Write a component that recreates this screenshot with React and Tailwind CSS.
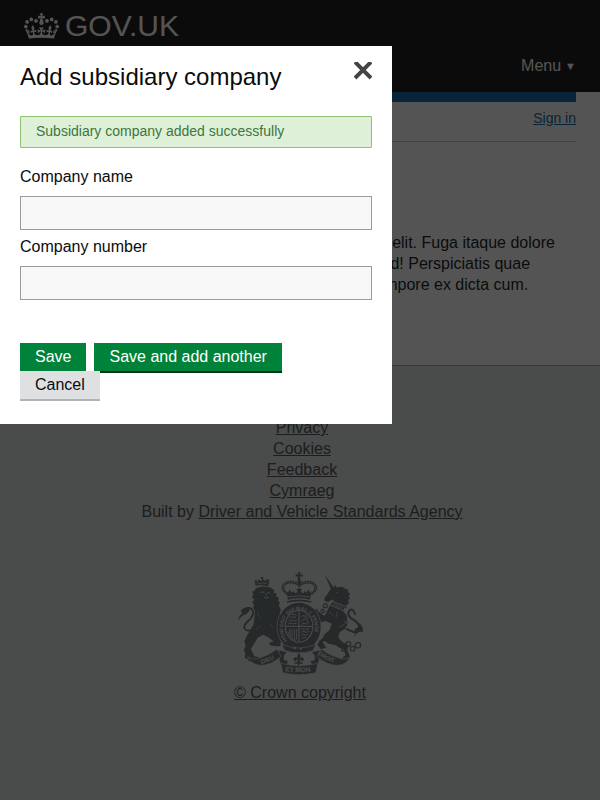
import React from "react";

function GovCrown() {
  return (
    <svg aria-hidden="true" viewBox="0 0 132 97" className="h-[26px] w-[35px] shrink-0" fill="currentColor">
      <path d="M25 30.2c3.5 1.5 7.7-.2 9.1-3.7 1.5-3.6-.2-7.8-3.9-9.2-3.6-1.4-7.6.3-9.1 3.9-1.4 3.5.3 7.5 3.9 9zM9 39.5c3.6 1.5 7.8-.2 9.2-3.7 1.5-3.6-.2-7.8-3.9-9.1-3.6-1.5-7.6.2-9.1 3.8-1.4 3.5.3 7.5 3.8 9zM4.4 57.2c3.5 1.5 7.7-.2 9.1-3.8 1.5-3.6-.2-7.7-3.9-9.1-3.5-1.5-7.6.3-9.1 3.8-1.4 3.5.3 7.6 3.9 9.1zm38.3-21.4c3.5 1.5 7.7-.2 9.1-3.8 1.5-3.6-.2-7.7-3.9-9.1-3.6-1.5-7.6.3-9.1 3.8-1.3 3.6.4 7.7 3.9 9.1zm64.4-5.6c-3.6 1.5-7.8-.2-9.1-3.7-1.5-3.6.2-7.8 3.8-9.2 3.6-1.4 7.7.3 9.2 3.9 1.3 3.5-.4 7.5-3.9 9zm15.9 9.3c-3.6 1.5-7.7-.2-9.1-3.7-1.5-3.6.2-7.8 3.7-9.1 3.6-1.5 7.7.2 9.2 3.8 1.5 3.5-.3 7.5-3.8 9zm4.7 17.7c-3.6 1.5-7.8-.2-9.2-3.8-1.5-3.6.2-7.7 3.9-9.1 3.6-1.5 7.7.3 9.2 3.8 1.3 3.5-.4 7.6-3.9 9.1zM89.3 35.8c-3.6 1.5-7.8-.2-9.2-3.8-1.4-3.6.2-7.7 3.9-9.1 3.6-1.5 7.7.3 9.2 3.8 1.4 3.6-.3 7.7-3.9 9.1zM69.7 17.7l8.9 4.7V9.3l-8.9 2.8c-.2-.3-.5-.6-.9-.9L72.4 0H59.6l3.5 11.2c-.3.3-.6.5-.9.9l-8.8-2.8v13.1l8.8-4.7c.3.3.6.7.9.9l-5 15.4v.1c-.2.8-.4 1.6-.4 2.4 0 4.1 3.1 7.5 7 8.1h.2c.3 0 .7.1 1 .1.4 0 .7 0 1-.1h.2c4-.6 7.1-4.1 7.1-8.1 0-.8-.1-1.7-.4-2.4V34l-5.1-15.4c.4-.2.7-.6 1-.9zM66 92.8c16.9 0 32.8 1.1 47.1 3.2 4-16.9 8.9-26.7 14-33.5l-9.6-3.4c1 4.9 1.1 7.2 0 10.2-1.5-1.4-3-4.3-4.2-8.7L108.6 76c2.8-2 5-3.2 7.5-3.3-4.4 9.4-10 11.9-13.6 11.2-4.3-.8-6.3-4.6-5.6-7.9 1-4.7 5.7-5.9 8-.5 4.3-8.7-3-11.4-7.6-8.8 7.1-7.2 7.9-13.5 2.1-21.1-8 6.1-8.1 12.3-4.5 20.8-4.7-5.4-12.1-2.5-9.5 6.2 3.4-5.2 7.9-2 7.2 3.1-.6 4.3-6.4 7.8-13.5 7.2-10.3-.9-10.9-8-11.2-13.8 2.5-.5 7.1 1.8 11 7.3L80.2 60c-4.1 4.4-8 5.3-12.3 5.4 1.4-4.4 8-11.6 8-11.6H55.5s6.4 7.2 7.9 11.6c-4.2-.1-8-1-12.3-5.4l1.4 16.4c3.9-5.5 8.5-7.7 10.9-7.3-.3 5.8-.9 12.8-11.1 13.8-7.2.6-12.9-2.9-13.5-7.2-.7-5 3.8-8.3 7.1-3.1 2.7-8.7-4.6-11.6-9.4-6.2 3.7-8.5 3.6-14.7-4.6-20.8-5.8 7.6-5 13.9 2.2 21.1-4.7-2.6-11.9.1-7.7 8.8 2.3-5.5 7.1-4.2 8.1.5.7 3.3-1.3 7.1-5.7 7.9-3.5.7-9-1.8-13.5-11.2 2.5.1 4.7 1.3 7.5 3.3l-4.7-15.4c-1.2 4.4-2.7 7.2-4.3 8.7-1.1-3-.9-5.3 0-10.2l-9.5 3.4c5 6.9 9.9 16.7 14 33.5 14.8-2.1 30.8-3.2 47.7-3.2z" />
    </svg>
  );
}

function RoyalArms() {
  const ink = "#666e73";
  const paper = "#dee0e2";
  return (
    <svg
      aria-hidden="true"
      viewBox="54 33 375 312"
      className="h-[104px] w-[125px]"
      fill={ink}
      stroke="none"
      fontFamily="'Liberation Sans', Arial, sans-serif"
      fontWeight="bold"
    >
      <defs>
        <path id="garter" d="M202 241A48 54 0 1 1 272 241" />
        <path id="dieu" d="M124 312Q156 305 184 280" />
        <path id="mon" d="M195 334Q238 341 290 332" />
        <path id="droit" d="M293 282Q318 306 366 312" />
      </defs>

      {/* lion */}
      <g>
        <path d="M107 78L104 62l8 5 4-10 8 7 4-8 7 7 8-6 1 10 5-2-5 14q-18-5-37-2z" />
        <circle cx="126" cy="54" r="4" />
        <circle cx="108" cy="62" r="3" />
        <circle cx="145" cy="61" r="3" />
        <path d="M111 72q16-5 31-1" stroke={paper} strokeWidth="2" fill="none" />
        <path d="M108 84q20-8 41-2l14 8-2 8 9 2-2 9 9 4-3 8 6 8-4 7 7 13-4 10 3 19-6 10 14 18 10 8-6 10-11 18-2 16-15 1-18-4 2-8 12-2-14-11-18-10-17 9-8 14-12 20 10 22 15 3 4 7-9 5-15-2-10 3-6-9-8-2 2-15-5-9 6-11-4-16 9-18 18-30 4-27 1-16-6-9 3-9-6-7 7-7-7-9 5-8-5-7 9-5z" />
        <path d="M109 206Q83 217 75 207T91 177Q106 158 96 148T68 155" fill="none" stroke={ink} strokeWidth="6" strokeLinecap="round" />
        <path d="M54 181q3-16 14-22l-7-6q14-15 31-11-3 14-13 21-13 2-25 18z" />
        <path d="M120 98l9-3 5 5m8-2l9 1M132 112q8 5 15 0m-8-12v9" stroke={paper} strokeWidth="2.5" fill="none" />
        <path d="M113 156l5 17m31 17l10 14m-51 6l13-12" stroke={paper} strokeWidth="1.5" fill="none" />
      </g>

      {/* crown over the shield */}
      <g>
        <path d="M233 37h9l-2 7 8-2v8l-8-1 1 11h-8l1-11-7 1v-8l8 2z" />
        <circle cx="238" cy="65" r="6" />
        <g fill="none" stroke={ink} strokeWidth="6" strokeLinecap="round">
          <path d="M199 101Q178 84 193 71 213 57 236 73M277 101Q298 84 283 71 263 57 240 73" strokeDasharray="1 7" />
          <path d="M202 101Q184 85 197 73 214 63 235 76M274 101Q292 85 279 73 262 63 241 76" strokeWidth="3" />
          <path d="M238 70v26" strokeDasharray="1 7" />
        </g>
        <path d="M199 94l5 4 5-10 6 10 6-5 4 7 8-4-4-9h17l-4 9 8 4 4-7 6 5 5-10 5 10 5-4-5 25q-33-8-66 0z" />
        <path d="M204 111q34-7 67 0" fill="none" stroke={paper} strokeWidth="2.5" />
        <path d="M201 126q37-10 73 0" fill="none" stroke={ink} strokeWidth="5" />
      </g>

      {/* unicorn */}
      <g>
        <path d="M313 42l29 42-8 5z" />
        <path d="M332 87l10-5 3-7 6 8q18-7 27 5l8 1-3 7 8 6-5 5 4 10-6 3 3 11-7 2-1 12-7-1-3 13-43-14 8-12 8-10-7-2-11 8-10-4-1-9 9-11z" />
        <path d="M329 137l42 18 10 12 2 26-9 15-15 9-4 15 11 13 20 11-4 14 8 20-6 4-14 3-2-6 9-4-5-17-27-15-20-4-17-15 4-12 16-13 8-20-22-9-16 9-12-3 5-9 9-1-7-12-12-10-2-8 11-1 7 9 17 12z" />
        <path d="M327 234l-19 13 11 16-16 5-11-13 6-13 18-15z" />
        <path d="M380 207Q413 225 417 207T392 174Q379 159 389 151T405 163" fill="none" stroke={ink} strokeWidth="6" strokeLinecap="round" />
        <path d="M415 188q17 9 13 29-13-6-25 12 4-16 0-22 15 0 12-19z" />
        <path d="M332 136l42 17m-36-28l39 15" fill="none" stroke={paper} strokeWidth="3" />
        <path d="M340 131l3 5 4-3 2 6 5-3 2 6 5-3 3 6 5-3" fill="none" stroke={paper} strokeWidth="2" />
        <circle cx="350" cy="97" r="2" fill={paper} />
        <g fill="none" stroke={paper} strokeWidth="2">
          <path d="M327 156l12 11m13-12l-4 17M373 193l-15 9m19 12l-14 12" />
          <circle cx="378" cy="187" r="4" />
          <circle cx="376" cy="214" r="4" />
        </g>
        <g fill="none" stroke={ink} strokeWidth="3.5">
          <circle cx="316" cy="137" r="6" />
          <circle cx="308" cy="153" r="5" />
          <circle cx="361" cy="255" r="6" />
          <circle cx="371" cy="268" r="6" />
          <circle cx="385" cy="252" r="7" />
          <circle cx="398" cy="266" r="7" />
          <circle cx="414" cy="256" r="8" />
        </g>
      </g>

      {/* garter and quartered shield */}
      <ellipse cx="237" cy="201" rx="67" ry="75" fill={paper} />
      <ellipse cx="237" cy="201" rx="65" ry="73" />
      <ellipse cx="237" cy="199" rx="43" ry="49" fill={paper} />
      <ellipse cx="237" cy="199" rx="40" ry="46" />
      <path d="M237 154v90M197 199h80" stroke={paper} strokeWidth="3" />
      <g fill="none" stroke={paper} strokeWidth="2.5">
        <path d="M208 174l6-4 6 3 8-3M206 183l8-3 6 3 10-3M205 192l8-3 7 3 10-3M216 165l8-2 6 2" />
        <path d="M244 170l8-4 5 7 8 1M246 185l6-9 9 4 5 7-8 5-9-3M244 193l7-3M256 165l6 4" />
        <path d="M210 207v19m6-19v26m7-26v30m7-30v32M204 214q5 21 24 27" />
        <path d="M244 208l9-2 7 3 8-3M244 217l8-3 7 3 10-3M244 226l7-3 8 3 5-2M245 235l7-3 5 1" />
      </g>
      <path d="M185 253q52 22 103 0l-9 19q-42 13-84 0z" stroke={paper} strokeWidth="2" />
      <circle cx="224" cy="264" r="4" fill={paper} />
      <circle cx="243" cy="266" r="3" fill={paper} />
      <text fontSize="15" fill={paper}>
        <textPath href="#garter">HONI SOIT QUI MAL Y PENSE</textPath>
      </text>

      {/* motto scroll */}
      <g stroke={paper} strokeWidth="2">
        <path d="M176 270l25 6q-12 9-8 24l12 2-5 16-18-3q-8-25-6-45z" />
        <path d="M300 270l-25 6q12 9 8 24l-12 2 5 16 18-3q8-25 6-45z" />
        <path d="M83 290q13 11 35 4 31-9 53-27l12 22q-30 29-65 27-24-4-35-26z" />
        <path d="M392 290q-13 11-35 4-31-9-53-27l-14 22q32 29 67 27 24-4 35-26z" />
        <path d="M183 310q55 14 110 0l-5 28q-50 12-100 0z" />
      </g>
      <path d="M237 278q-9 13-4 18-9-9-13 1 1 8 8 5l6-4-3 9h-7v4h8l4 7 4-7h8v-4h-7l-3-9q12 11 14-1-4-10-13-1 6-6-2-18z" />
      <g fill={paper} fontSize="18">
        <text><textPath href="#dieu">DIEU</textPath></text>
        <text fontSize="20"><textPath href="#mon">ET MON</textPath></text>
        <text><textPath href="#droit">DROIT</textPath></text>
      </g>
    </svg>
  );
}

function Header() {
  return (
    <header className="bg-[#0b0c0c] px-6 text-white">
      <a href="#home" className="flex h-[52px] items-center gap-1.5">
        <GovCrown />
        <span className="text-[30px] leading-[30px]">GOV.UK</span>
      </a>
      <div className="flex h-10 justify-end">
        <button type="button" className="flex h-7 items-center gap-1">
          Menu <span className="text-[11px]">▼</span>
        </button>
      </div>
    </header>
  );
}

function Field({ id, label }) {
  return (
    <div className="mb-1.5">
      <label htmlFor={id} className="mb-2 block leading-[22px]">
        {label}
      </label>
      <input id={id} type="text" className="block h-[34px] w-full border border-[#999b9c] bg-[#f8f8f8] px-2" />
    </div>
  );
}

function Dialog() {
  return (
    <div
      role="dialog"
      aria-modal="true"
      aria-labelledby="dialog-title"
      className="absolute left-0 top-[46px] w-[392px] max-w-full bg-white px-5 pb-[25px] pt-4"
    >
      <div className="mb-6 flex items-start justify-between">
        <h1 id="dialog-title" className="text-2xl leading-[30px]">
          Add subsidiary company
        </h1>
        <button type="button" aria-label="Close" className="p-0">
          <svg viewBox="0 0 18 18" className="size-[18px]" stroke="#444" strokeWidth="4" fill="none">
            <path d="M1 0l16 16M17 0L1 16" />
          </svg>
        </button>
      </div>
      <p
        role="status"
        className="mb-[18px] rounded-[1px] border border-[#8fc373] bg-[#dff0d8] px-[15px] pb-1.5 pt-1 text-sm leading-5 text-[#3c763d]"
      >
        Subsidiary company added successfully
      </p>
      <form>
        <Field id="company-name" label="Company name" />
        <Field id="company-number" label="Company number" />
        <div className="flex flex-col items-start pt-[37px]">
          <div className="flex gap-2">
            <button type="button" className="h-7 bg-[#00823b] px-[15px] text-white shadow-[0_2px_0_#003618]">
              Save
            </button>
            <button type="button" className="h-7 bg-[#00823b] px-[15px] text-white shadow-[0_2px_0_#003618]">
              Save and add another
            </button>
          </div>
          <button type="button" className="relative h-7 bg-[#dee0e2] px-[15px] shadow-[0_2px_0_#b0b4b9]">
            Cancel
          </button>
        </div>
      </form>
    </div>
  );
}

const footerLinks = ["Privacy", "Cookies", "Feedback", "Cymraeg"];

export default function App() {
  return (
    <div className="relative flex min-h-screen flex-col bg-white font-['Liberation_Sans',Arial,sans-serif] text-base text-[#0b0c0c]">
      <Header />
      <main className="mx-6 grow-0 border-t-10 border-[#005ea5]">
        <div className="flex h-10 items-start justify-end border-b border-[#bfc1c3] pt-1.5">
          <a href="#sign-in" className="text-sm leading-5 text-[#005ea5] underline">
            Sign in
          </a>
        </div>
        <p className="pb-[70px] pt-[90px] leading-[21px]">
          Lorem ipsum dolor sit amet, consectetur adipisicing elit. Fuga itaque dolore
          <br />
          nihil vitae eum ducimus sint obcaecati laborum, quod! Perspiciatis quae
          <br />
          molestiae quidem nulla eligendi nostrum sed ab, tempore ex dicta cum.
        </p>
      </main>
      <footer className="flex grow flex-col items-center border-t border-[#a1acb2] bg-[#dee0e2] px-6 pb-10 pt-[51px] text-[#454a4c]">
        <ul className="pl-1 text-center leading-[21px]">
          {footerLinks.map((name) => (
            <li key={name}>
              <a href={"#" + name.toLowerCase()} className="underline">
                {name}
              </a>
            </li>
          ))}
          <li>
            Built by{" "}
            <a href="#dvsa" className="underline">
              Driver and Vehicle Standards Agency
            </a>
          </li>
        </ul>
        <a href="#copyright" className="mt-[49px] flex flex-col items-center gap-[7px] leading-[21px] underline">
          <RoyalArms />
          © Crown copyright
        </a>
      </footer>
      <div className="absolute inset-0 bg-[#0b0c0c]/70" />
      <Dialog />
    </div>
  );
}
